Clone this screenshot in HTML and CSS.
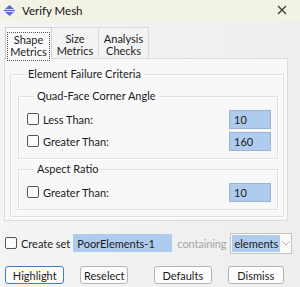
FILE: index.html
```html
<!DOCTYPE html>
<html lang="en">
  <head>
    <meta charset="UTF-8" />
    <title>Verify Mesh</title>
    <link rel="stylesheet" href="styles.css">
  </head>
  <body>
    <div class="dialog">
      <div class="titlebar">
        <svg class="app-icon" width="11" height="11" viewBox="0 0 11 11">
          <path d="M5.5 0 L10 4 L1 4 Z" fill="#5a6cc4" />
          <rect x="0" y="4.8" width="11" height="1.4" fill="#5a6cc4" />
          <path d="M1 7 L10 7 L5.5 11 Z" fill="#5a6cc4" />
        </svg>
        <span class="title">Verify Mesh</span>
        <svg class="close" width="10" height="10" viewBox="0 0 10 10">
          <path d="M1 1 L9 9 M9 1 L1 9" stroke="#3a3a3a" stroke-width="1.3" />
        </svg>
      </div>

      <div class="tabs">
        <div class="tab active"><span class="focus">Shape<br />Metrics</span></div>
        <div class="tab"><span>Size<br />Metrics</span></div>
        <div class="tab"><span>Analysis<br />Checks</span></div>
      </div>

      <div class="panel">
        <fieldset class="group outer">
          <legend>Element Failure Criteria</legend>

          <fieldset class="group inner">
            <legend>Quad-Face Corner Angle</legend>
            <div class="row">
              <label class="check"><span class="box"></span>Less Than:</label>
              <input class="num" type="text" value="10" />
            </div>
            <div class="row">
              <label class="check"><span class="box"></span>Greater Than:</label>
              <input class="num" type="text" value="160" />
            </div>
          </fieldset>

          <fieldset class="group inner">
            <legend>Aspect Ratio</legend>
            <div class="row">
              <label class="check"><span class="box"></span>Greater Than:</label>
              <input class="num" type="text" value="10" />
            </div>
          </fieldset>
        </fieldset>
      </div>

      <div class="setrow">
        <label class="check"><span class="box"></span>Create set</label>
        <input class="setname" type="text" value="PoorElements-1" />
        <span class="muted">containing</span>
        <div class="select">
          <span class="selected">elements</span>
          <svg width="8" height="5" viewBox="0 0 8 5">
            <path d="M0.5 0.5 L4 4 L7.5 0.5" fill="none" stroke="#b0b0b0" stroke-width="1" />
          </svg>
        </div>
      </div>

      <div class="buttons">
        <button class="btn default">Highlight</button>
        <button class="btn">Reselect</button>
        <button class="btn">Defaults</button>
        <button class="btn">Dismiss</button>
      </div>
    </div>
  </body>
</html>
```

FILE: styles.css
```css
* {
  margin: 0;
  padding: 0;
  box-sizing: border-box;
}
body {
  width: 300px;
  height: 287px;
  overflow: hidden;
  background: #f0f0f0;
  font-family: Lato, "Noto Sans", sans-serif;
  font-size: 11px;
  color: #1b1b1b;
}
.dialog {
  width: 300px;
  height: 287px;
  background: linear-gradient(90deg, #f4f4f4 0%, #eeeeee 100%);
}
.titlebar {
  height: 22px;
  background: #f3f3e5;
  display: flex;
  align-items: center;
  padding: 0 13px 1px 4px;
}
.app-icon {
  margin-right: 7px;
}
.title {
  font-size: 11.5px;
  color: #111;
  flex: 1;
}
.close {
  margin-top: -2px;
}
.tabs {
  display: flex;
  align-items: flex-end;
  padding: 5px 0 0 5px;
}
.tab {
  width: 48px;
  height: 31px;
  border: 1px solid #dcdcdc;
  border-bottom: none;
  background: #f3f3f3;
  text-align: center;
  line-height: 12px;
  padding-top: 5px;
  margin-left: -1px;
  white-space: nowrap;
}
.tab:first-child {
  margin-left: 0;
  width: 47px;
}
.tab:last-child {
  width: 51px;
}
.tab.active {
  height: 32px;
  background: #fafafa;
  border-color: #d0d0d0;
  padding-top: 4px;
  position: relative;
  z-index: 1;
  margin-bottom: -1px;
}
.tab .focus {
  display: inline-block;
  border: 1px dotted #555;
  padding: 1px 2px 2px;
}
.panel {
  margin: 0 12px 0 4px;
  height: 163px;
  border: 1px solid #dcdcdc;
  background: #f8f8f8;
  padding: 8px 3px 3px 5px;
}
.group {
  border: 1px solid #e0e0e0;
  box-shadow: inset 1px 1px 0 #ffffff, 1px 1px 0 #ffffff;
}
.group legend {
  padding: 0 3px;
  margin-left: 7px;
  line-height: 14px;
}
.outer {
  height: 150px;
  padding: 8px 5px 0 7px;
}
.inner {
  padding: 5px 6px 6px 8px;
  margin-bottom: 3px;
}
.row {
  display: flex;
  align-items: center;
  justify-content: space-between;
  height: 22px;
  white-space: nowrap;
}
.check {
  display: flex;
  align-items: center;
  white-space: nowrap;
}
.box {
  width: 12px;
  height: 12px;
  border: 1px solid #555;
  border-radius: 2px;
  background: #fbfbfb;
  margin-right: 4px;
}
.num {
  width: 42px;
  height: 19px;
  border: 1px solid #9db3cf;
  background: #afcbed;
  font: inherit;
  color: #1b1b1b;
  padding: 0 4px;
  outline: none;
}
.setrow {
  display: flex;
  align-items: center;
  padding: 11px 0 0 5px;
  height: 33px;
  white-space: nowrap;
}
.setrow .check {
  margin-right: 3px;
}
.setname {
  width: 99px;
  height: 18px;
  border: 1px solid #afcbed;
  background: #afcbed;
  font: inherit;
  color: #1b1b1b;
  padding: 0 3px;
  outline: none;
}
.muted {
  color: #a8a8a8;
  margin: 0 4px 0 5px;
  letter-spacing: -0.1px;
}
.select {
  width: 62px;
  height: 21px;
  border: 1px solid #c4c4c4;
  background: #fafafa;
  display: flex;
  align-items: center;
  padding: 1px;
}
.selected {
  flex: 1;
  height: 17px;
  line-height: 17px;
  background: #afcbed;
  padding-left: 2px;
  margin-right: 2px;
}
.buttons {
  display: flex;
  padding: 12px 0 0 5px;
}
.btn {
  height: 18px;
  border: 1px solid #b4b4b4;
  border-radius: 3px;
  background: #fcfcfc;
  font: inherit;
  color: #1b1b1b;
  margin-right: 16px;
}
.btn:nth-child(1) {
  width: 60px;
}
.btn:nth-child(2) {
  width: 48px;
  margin-right: 26px;
}
.btn:nth-child(3) {
  width: 58px;
}
.btn:nth-child(4) {
  width: 57px;
}
.btn.default {
  border-color: #3c7fc0;
}
```
